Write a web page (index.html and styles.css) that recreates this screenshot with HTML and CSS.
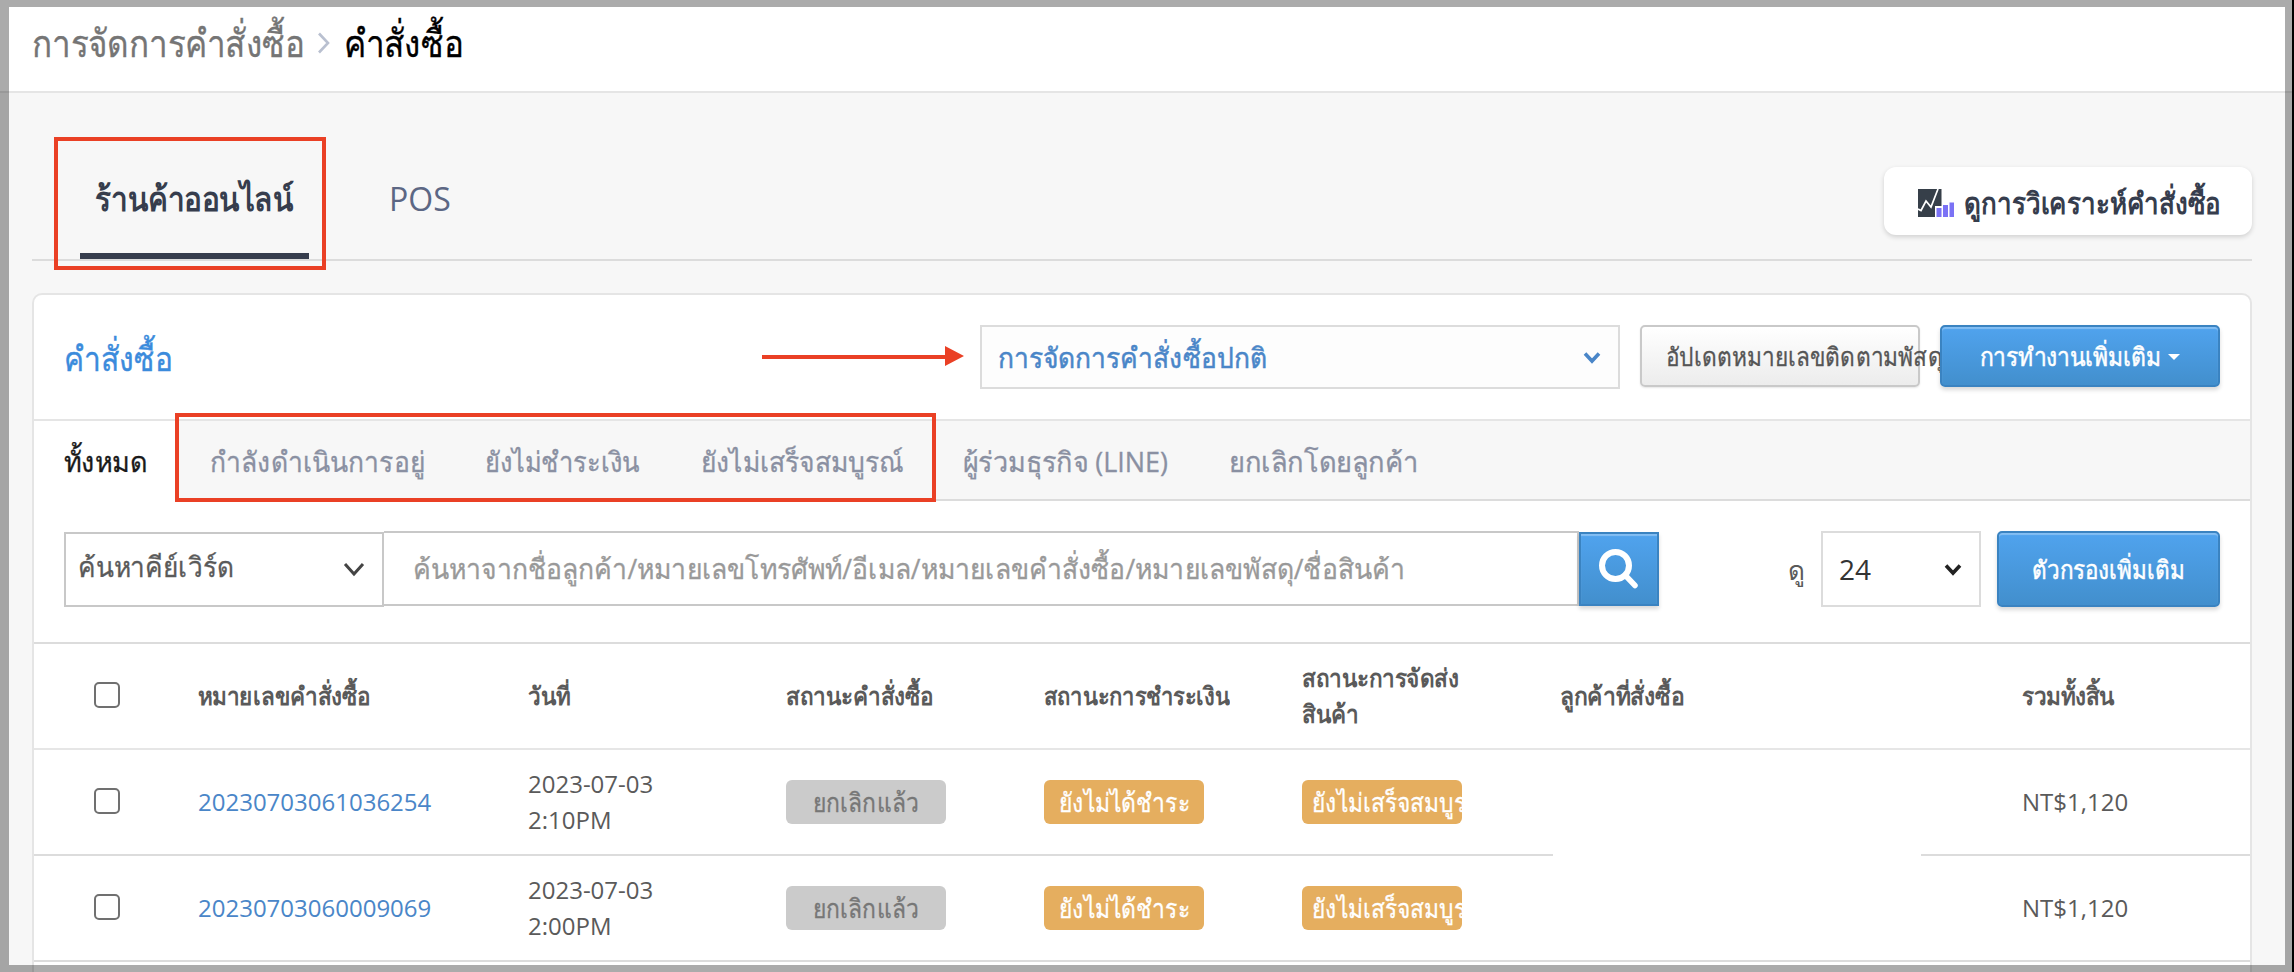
FILE: index.html
```html
<!DOCTYPE html>
<html lang="th">
<head>
<meta charset="utf-8">
<title>คำสั่งซื้อ</title>
<link rel="stylesheet" href="styles.css">
</head>
<body>
<div class="page">
  <header class="topbar">
    <span class="crumb"><span class="th">การจัดการคำสั่งซื้อ</span></span>
    <svg class="crumb-sep" width="14" height="22" viewBox="0 0 14 22"><path d="M2 1.500l9 9.500-9 9.500" fill="none" stroke="#b9c0d0" stroke-width="2.600"/></svg>
    <span class="crumb current"><span class="th">คำสั่งซื้อ</span></span>
  </header>
  <main class="content">
    <nav class="channels">
      <a class="channel active"><span class="th mid">ร้านค้าออนไลน์</span></a>
      <a class="channel">POS</a>
      <a class="analytics">
        <svg class="chart" width="37" height="28" viewBox="0 0 37 28"><path d="M0 0h23.500v17H17v11H0z" fill="#363f49"/><path d="M0 20l3 1.500 5-9.500 5 6L20 0" fill="none" stroke="#fff" stroke-width="1.700"/><path d="M18.500 19h5v9h-5zM25 16h5v12h-5zM31.500 13.500h4.500V28h-4.500z" fill="#7b72f5"/></svg>
        <span class="th">ดูการวิเคราะห์คำสั่งซื้อ</span>
      </a>
    </nav>
    <section class="card">
      <div class="card-head">
        <h1 class="title"><span class="th">คำสั่งซื้อ</span></h1>
        <div class="select mode"><span class="th">การจัดการคำสั่งซื้อปกติ</span>
          <svg width="18" height="13" viewBox="0 0 18 13"><path d="M2 2.500l7 7.500 7-7.500" fill="none" stroke="#4a86c8" stroke-width="3.600"/></svg></div>
        <button class="btn plain"><span class="th">อัปเดตหมายเลขติดตามพัสดุ</span></button>
        <button class="btn blue more"><span class="th">การทำงานเพิ่มเติม</span><i class="caret"></i></button>
      </div>
      <nav class="filters">
        <a class="filter selected"><span class="th">ทั้งหมด</span></a>
        <a class="filter f2"><span class="th">กำลังดำเนินการอยู่</span></a>
        <a class="filter f3"><span class="th">ยังไม่ชำระเงิน</span></a>
        <a class="filter f4"><span class="th">ยังไม่เสร็จสมบูรณ์</span></a>
        <a class="filter f5"><span class="th">ผู้ร่วมธุรกิจ (LINE)</span></a>
        <a class="filter f6"><span class="th">ยกเลิกโดยลูกค้า</span></a>
      </nav>
      <div class="search">
        <div class="select keyword"><span class="th">ค้นหาคีย์เวิร์ด</span>
          <svg width="22" height="15" viewBox="0 0 22 15"><path d="M2 2l9 10 9-10" fill="none" stroke="#444" stroke-width="3"/></svg></div>
        <div class="query"><span class="th">ค้นหาจากชื่อลูกค้า/หมายเลขโทรศัพท์/อีเมล/หมายเลขคำสั่งซื้อ/หมายเลขพัสดุ/ชื่อสินค้า</span></div>
        <button class="btn blue go"><svg width="40" height="40" viewBox="0 0 40 40"><circle cx="16.500" cy="16.500" r="13.500" fill="none" stroke="#fff" stroke-width="6"/><path d="M26 26l10 10.500" stroke="#fff" stroke-width="5.500" stroke-linecap="round"/></svg></button>
        <span class="show">ดู</span>
        <div class="select count"><span>24</span>
          <svg width="18" height="13" viewBox="0 0 18 13"><path d="M2 2.500l7 7.500 7-7.500" fill="none" stroke="#222" stroke-width="3.600"/></svg></div>
        <button class="btn blue adv"><span class="th mid">ตัวกรองเพิ่มเติม</span></button>
      </div>
      <div class="table">
        <div class="row head">
          <span class="check"></span><b class="th">หมายเลขคำสั่งซื้อ</b><b class="th">วันที่</b><b class="th">สถานะคำสั่งซื้อ</b><b class="th pay">สถานะการชำระเงิน</b><b class="th">สถานะการจัดส่ง<br>สินค้า</b><b class="th buyer">ลูกค้าที่สั่งซื้อ</b><b class="th">รวมทั้งสิ้น</b>
        </div>
        <div class="row">
          <span class="check"></span><a class="link">20230703061036254</a><span>2023-07-03<br>2:10PM</span><span class="badge grey"><i class="th mid">ยกเลิกแล้ว</i></span><span class="badge"><i class="th mid">ยังไม่ได้ชำระ</i></span><span class="badge cut"><i class="th">ยังไม่เสร็จสมบูรณ์</i></span><span></span><span>NT$1,120</span>
        </div>
        <div class="row broken">
          <span class="check"></span><a class="link">20230703060009069</a><span>2023-07-03<br>2:00PM</span><span class="badge grey"><i class="th mid">ยกเลิกแล้ว</i></span><span class="badge"><i class="th mid">ยังไม่ได้ชำระ</i></span><span class="badge cut"><i class="th">ยังไม่เสร็จสมบูรณ์</i></span><span></span><span>NT$1,120</span>
        </div>
      </div>
    </section>
  </main>
  <div class="mark mark-channel"></div>
  <div class="mark mark-filters"></div>
  <svg class="arrow" width="202" height="20" viewBox="0 0 202 20"><path d="M0 9h184v4H0zM183 0l19 10-19 10z" fill="#ea4025"/></svg>
  <div class="frame"></div>
</div>
</body>
</html>
```
FILE: styles.css
```css
* { box-sizing: border-box; }
body { margin: 0; }
.page { position: relative; width: 2294px; height: 972px; overflow: hidden; background: #f7f7f7; font: 24px/36px "Open Sans", "Noto Sans", sans-serif; color: #5a5a5a; display: flex; flex-direction: column; }
/* Thai labels are set slightly condensed */
.th { --sx: .88; display: inline-block; font-style: normal; white-space: nowrap; transform: scaleX(var(--sx)); transform-origin: 0 50%; }
.th.mid { transform-origin: 50% 50%; }
.topbar { flex: none; height: 93px; background: #fff; border-bottom: 2px solid #e5e5e5; padding: 0 0 8px 32px; display: flex; align-items: center; }
.crumb { width: 271px; font-size: 38px; white-space: nowrap; color: #757575; -webkit-text-stroke: .3px; }
.crumb .th { --sx: .875; }
.crumb-sep { flex: none; margin: 2px 13px 0 14px; }
.crumb.current { color: #000; }
.content { flex: 1; padding: 0 42px 0 32px; }
.channels { height: 168px; border-bottom: 2px solid #dcdcdc; display: flex; padding-left: 48px; }
.channel { height: 166px; padding: 86px 0 0; font-size: 32px; line-height: 40px; color: #5c6784; white-space: nowrap; }
.channel.active { width: 229px; margin-right: 80px; padding: 85px 2px 0 0; font-size: 34px; display: flex; justify-content: center; font-weight: 700; color: #363d4d; border-bottom: 6px solid #363d4d; }
.channel .th { --sx: .875; }
.analytics { width: 368px; height: 68px; margin: 74px 0 0 auto; border-radius: 12px; background: #fff; box-shadow: 0 2px 5px rgba(0,0,0,.16); padding: 3px 0 0 34px; display: flex; align-items: center; gap: 9px; font-weight: 700; font-size: 29.500px; color: #363d4d; white-space: nowrap; }
.chart { flex: none; }
.card { margin-top: 32px; height: 720px; border: 2px solid #e5e5e5; border-radius: 10px; background: #fff; }
.card-head { height: 126px; border-bottom: 2px solid #e5e5e5; display: flex; padding: 30px 30px 0 30px; }
.title { margin: 13px 0 0; font-weight: 400; font-size: 34px; line-height: 40px; color: #3b8bdc; width: 916px; -webkit-text-stroke: .4px; }
.select { display: flex; align-items: center; justify-content: space-between; background: #fff; border: 2px solid #dcdcdc; white-space: nowrap; }
.mode { width: 640px; height: 64px; padding: 0 17px 0 16px; background: #fdfdfd; color: #4a86c8; font-size: 28px; -webkit-text-stroke: .5px; }
.mode .th { --sx: .942; }
.btn { font: inherit; margin: 0; padding: 0; border: 2px solid #c9c9c9; border-radius: 5px; display: flex; align-items: center; justify-content: center; white-space: nowrap; }
.plain { width: 280px; height: 62px; margin-left: 20px; padding-left: 24px; justify-content: flex-start; background: linear-gradient(#fff, #ececec); color: #555; font-size: 25.500px; box-shadow: 0 1px 2px rgba(0,0,0,.1); -webkit-text-stroke: .3px; }
.plain .th { --sx: .89; }
.blue { color: #fff; background: linear-gradient(#50a3ee, #428fcd); border-color: #3a83c1; box-shadow: 0 3px 4px rgba(0,0,0,.15), inset 0 2px 1px rgba(255,255,255,.3); -webkit-text-stroke: .5px; font-size: 25.500px; }
.more { position: relative; width: 280px; height: 62px; margin-left: 20px; padding-left: 38px; justify-content: flex-start; }
.more .th { --sx: .895; }
.caret { margin: 2px 0 0 -15px; border: 6px solid transparent; border-top-color: #fff; border-bottom: 0; }
.filters { height: 80px; display: flex; font-size: 28px; color: #8a90a2; white-space: nowrap; -webkit-text-stroke: .3px; }
.filter { height: 80px; padding-top: 22px; background: #f7f7f7; border-bottom: 2px solid #dcdcdc; }
.filter .th { --sx: .946; }
.selected { width: 145px; padding-left: 30px; background: #fff; border-bottom: 0; color: #1a1a1a; }
.selected .th { --sx: .965; }
.f2 { width: 306px; padding-left: 31px; }
.f3 { width: 216px; }
.f3 .th { --sx: .91; }
.f4 { width: 262px; }
.f5 { width: 266px; }
.f5 .th { --sx: .963; }
.f6 { flex: 1; }
.f6 .th { --sx: .974; }
.search { height: 141px; display: flex; padding: 30px 30px 0; }
.keyword { width: 320px; height: 75px; margin-top: 1px; padding: 0 17px 0 12px; border-color: #c8c8c8; font-size: 28px; -webkit-text-stroke: .3px; }
.keyword .th { --sx: .937; margin-top: -8px; }
.query { width: 1195px; height: 75px; border: 2px solid #c8c8c8; border-left: 0; padding: 17px 0 0 29px; font-size: 28px; color: #999; white-space: nowrap; -webkit-text-stroke: .3px; }
.query .th { --sx: .949; }
.go { width: 80px; height: 74px; margin-top: 1px; border-radius: 0; }
.show { width: 33px; margin: 21px 0 0 129px; font-size: 26px; }
.count { width: 160px; height: 76px; padding: 0 17px 0 16px; font-size: 28px; color: #333; }
.adv { width: 223px; height: 76px; margin-left: 16px; }
.table { border-bottom: 2px solid #dcdcdc; }
.row { display: grid; grid-template-columns: 164px 330px 258px 258px 258px 258px 462px 1fr; height: 106px; align-items: center; border-top: 2px solid #dcdcdc; white-space: nowrap; }
.head { font-size: 25px; }
.head .th { justify-self: start; --sx: .9; margin-top: -2px; }
.head .pay { --sx: .879; }
.head .buyer { --sx: .915; }
.head + .row { border-color: #e6e6e6; }
.row.broken { border-image: linear-gradient(90deg, #dcdcdc 1518px, #fff 1518px, #fff 1886px, #dcdcdc 1886px) 2; border-width: 2px 0 0; }
.check { width: 26px; height: 26px; margin: 0 0 2px 60px; border: 2px solid #707070; border-radius: 5px; background: #fff; }
.link { color: #4a86c8; }
.badge { width: 160px; height: 44px; border-radius: 6px; background: #e5ae5f; color: #fff; display: flex; justify-content: center; line-height: 44px; overflow: hidden; font-size: 26px; -webkit-text-stroke: .3px; }
.badge .th { --sx: .88; }
.badge.grey { background: #cbcbcb; color: #777; }
.badge.cut { justify-content: flex-start; padding-left: 10px; }
.badge.cut .th { --sx: .875; }
.mark { position: absolute; border: 4px solid #ea4025; }
.mark-channel { left: 54px; top: 137px; width: 272px; height: 133px; }
.mark-filters { left: 175px; top: 413px; width: 761px; height: 89px; }
.arrow { position: absolute; left: 762px; top: 346px; }
.frame { position: absolute; inset: 0 2px 0 0; border: solid rgba(0,0,0,.33); border-width: 7px 7px 7px 9px; box-shadow: 2px 0 #000; }
```
